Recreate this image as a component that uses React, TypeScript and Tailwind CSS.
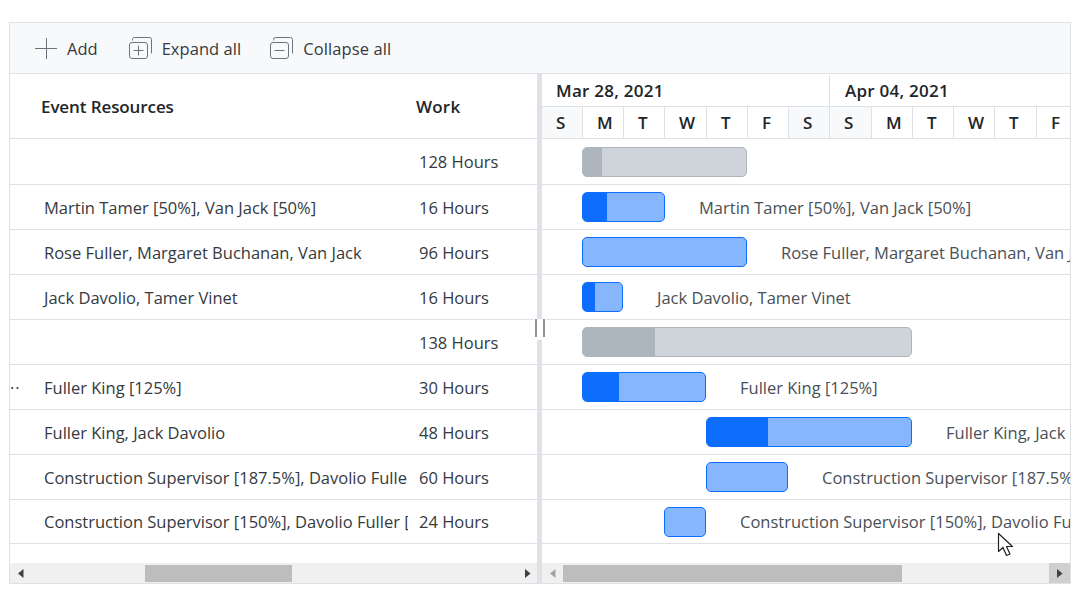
const days = [
  { d: "S", w: "w-[41px]", off: true },
  { d: "M", w: "w-[41px]", off: false },
  { d: "T", w: "w-[41px]", off: false },
  { d: "W", w: "w-[42px]", off: false },
  { d: "T", w: "w-[41px]", off: false },
  { d: "F", w: "w-[41px]", off: false },
  { d: "S", w: "w-[41px]", off: true },
  { d: "S", w: "w-[42px]", off: true },
  { d: "M", w: "w-[41px]", off: false },
  { d: "T", w: "w-[41px]", off: false },
  { d: "W", w: "w-[41px]", off: false },
  { d: "T", w: "w-[42px]", off: false },
  { d: "F", w: "w-[41px]", off: false },
];
const rows = [
  { name: "", work: "128 Hours", h: 46, left: 40, width: 165, progress: 19, kind: "group", label: "" },
  { name: "Martin Tamer [50%], Van Jack [50%]", work: "16 Hours", h: 45, left: 40, width: 83, progress: 24, kind: "task", label: "Martin Tamer [50%], Van Jack [50%]" },
  { name: "Rose Fuller, Margaret Buchanan, Van Jack", work: "96 Hours", h: 45, left: 40, width: 165, progress: 0, kind: "task", label: "Rose Fuller, Margaret Buchanan, Van Jack" },
  { name: "Jack Davolio, Tamer Vinet", work: "16 Hours", h: 45, left: 40, width: 41, progress: 12, kind: "task", label: "Jack Davolio, Tamer Vinet" },
  { name: "", work: "138 Hours", h: 45, left: 40, width: 330, progress: 72, kind: "group", label: "" },
  { name: "Fuller King [125%]", work: "30 Hours", h: 45, left: 40, width: 124, progress: 36, kind: "task", label: "Fuller King [125%]", dots: true },
  { name: "Fuller King, Jack Davolio", work: "48 Hours", h: 45, left: 164, width: 206, progress: 61, kind: "task", label: "Fuller King, Jack Davolio" },
  { name: "Construction Supervisor [187.5%], Davolio Fuller", work: "60 Hours", h: 45, left: 164, width: 82, progress: 0, kind: "task", label: "Construction Supervisor [187.5%], Davolio Fuller" },
  { name: "Construction Supervisor [150%], Davolio Fuller [", work: "24 Hours", h: 44, left: 122, width: 42, progress: 0, kind: "task", label: "Construction Supervisor [150%], Davolio Fuller" },
];

function PlusIcon() {
  return (
    <svg width="24" height="24" viewBox="0 0 24 24" className="text-[#6c757d]">
      <path d="M1 12.5H23M12.5 2V23" stroke="currentColor" strokeWidth="1" fill="none" />
    </svg>
  );
}

function StackIcon({ plus }: { plus: boolean }) {
  return (
    <svg width="24" height="24" viewBox="0 0 24 24" className="text-[#6c757d]">
      <path d="M3.5 4.5V3.5Q3.5 1.5 5.5 1.5H20.5Q22.5 1.5 22.5 3.5V17.5" stroke="currentColor" fill="none" />
      <rect x="0.5" y="6.5" width="18" height="16" rx="2.5" stroke="currentColor" fill="none" />
      <path d={plus ? "M4.5 14.5H14.5M9.5 9.5V19.5" : "M4.5 14.5H14.5"} stroke="currentColor" fill="none" />
    </svg>
  );
}

function Caret({ dir, color }: { dir: "l" | "r"; color: string }) {
  return (
    <svg width="6" height="9" viewBox="0 0 6 9" style={{ color }}>
      <path d={dir === "l" ? "M5.5 0V9L0 4.5Z" : "M0 0V9L5.5 4.5Z"} fill="currentColor" />
    </svg>
  );
}

export default function App() {
  return (
    <div className="w-[1080px] h-[597px] bg-white pt-[22px] pl-[9px] font-['Open_Sans','Noto_Sans',sans-serif] text-[#212529] overflow-hidden relative">
      <div className="w-[1062px] h-[562px] border border-[#dee2e6] flex flex-col">
        <div className="h-[51px] shrink-0 bg-[#f8f9fa] border-b border-[#dee2e6] flex items-center pl-[24px] text-[16.5px] text-[#343a40]">
          <div className="flex items-center gap-[9px]"><PlusIcon /><span className="pt-[2px]">Add</span></div>
          <div className="flex items-center gap-[9px] ml-[31px]"><StackIcon plus /><span className="pt-[2px] tracking-[0.05px]">Expand all</span></div>
          <div className="flex items-center gap-[9px] ml-[29px]"><StackIcon plus={false} /><span className="pt-[2px] tracking-[0.1px]">Collapse all</span></div>
        </div>
        <div className="flex flex-1 min-h-0 relative">
          <div className="w-[527px] shrink-0 flex flex-col">
            <div className="h-[65px] shrink-0 border-b border-[#dee2e6] flex items-center font-semibold text-[17px] pt-[2px]">
              <div className="w-[399px] pl-[31px] tracking-[-0.1px]">Event Resources</div>
              <div className="pl-[7px] tracking-[0.2px]">Work</div>
            </div>
            <div className="flex-1">
              {rows.map((r, i) => (
                <div key={i} style={{ height: r.h }} className="border-b border-[#dee2e6] flex items-center text-[16.5px] text-[#343a40] pt-[2px]">
                  <div className="w-[398px] pl-[34px] whitespace-nowrap overflow-hidden relative">
                    {r.dots && <span className="absolute left-0 top-[-5px] text-[16.5px] tracking-[1px]">..</span>}
                    {r.name}
                  </div>
                  <div className="pl-[11px] whitespace-nowrap">{r.work}</div>
                </div>
              ))}
            </div>
            <div className="h-[20px] shrink-0 bg-[#f0f0f0] flex items-center justify-between pl-[8px] pr-[6px] relative">
              <Caret dir="l" color="#404040" />
              <div className="w-[147px] h-[17px] bg-[#bdbdbd] ml-[121px] mr-auto" />
              <Caret dir="r" color="#404040" />
            </div>
          </div>
          <div className="w-[5px] shrink-0 bg-[#dee2e6] relative" />
          <div className="flex-1 min-w-0 flex flex-col overflow-hidden">
            <div className="h-[65px] shrink-0 border-b border-[#dee2e6] flex flex-col overflow-hidden">
              <div className="h-[33px] shrink-0 border-b border-[#dee2e6] flex font-semibold text-[17px] tracking-[0.25px] items-stretch pt-[1px]">
                <div className="w-[288px] shrink-0 border-r border-[#dee2e6] pl-[14px] flex items-center pt-[1px]">Mar 28, 2021</div>
                <div className="pl-[15px] flex items-center pt-[1px]">Apr 04, 2021</div>
              </div>
              <div className="flex-1 flex font-semibold text-[17px]">
                {days.map((c, i) => (
                  <div key={i} className={`${c.w} shrink-0 border-r border-[#dee2e6] flex items-center pl-[14px] ${c.off ? "bg-[#f8f9fa]" : "bg-white"}`}>{c.d}</div>
                ))}
              </div>
            </div>
            <div className="flex-1 overflow-hidden">
              {rows.map((r, i) => (
                <div key={i} style={{ height: r.h }} className="border-b border-[#dee2e6] flex items-center whitespace-nowrap text-[16.5px] text-[#495057] overflow-hidden">
                  <div style={{ marginLeft: r.left, width: r.width }} className={`h-[30px] shrink-0 rounded-[5px] border overflow-hidden ${r.kind === "group" ? "bg-[#ced4da] border-[#adb5bd]" : "bg-[#86b7fe] border-[#0d6efd]"}`}>
                    <div style={{ width: r.progress }} className={`h-full ${r.kind === "group" ? "bg-[#adb5bd]" : "bg-[#0d6efd]"}`} />
                  </div>
                  {r.label && <span className="ml-[34px] pt-[2px]">{r.label}</span>}
                </div>
              ))}
            </div>
            <div className="h-[20px] shrink-0 bg-[#f0f0f0] flex items-center">
              <div className="w-[21px] flex justify-center"><Caret dir="l" color="#a3a3a3" /></div>
              <div className="w-[339px] h-[17px] bg-[#bdbdbd]" />
              <div className="ml-auto w-[21px] h-[20px] bg-[#cfcfcf] flex items-center justify-center"><Caret dir="r" color="#404040" /></div>
            </div>
          </div>
          <div className="absolute left-[524px] top-[245px] w-[12px] h-[21px] bg-white flex justify-center gap-[6px]">
            <div className="w-[2px] h-[18px] bg-[#8d959c]" />
            <div className="w-[2px] h-[18px] bg-[#8d959c]" />
          </div>
        </div>
      </div>
      <svg className="absolute left-[997px] top-[532px]" width="20" height="26" viewBox="0 0 20 26">
        <path d="M1.5 1.5V19.5L6 15.5L9.5 23.5L13 22L9.5 14.5H15.5Z" fill="white" stroke="#222" strokeWidth="1.2" strokeLinejoin="round" />
      </svg>
    </div>
  );
}
